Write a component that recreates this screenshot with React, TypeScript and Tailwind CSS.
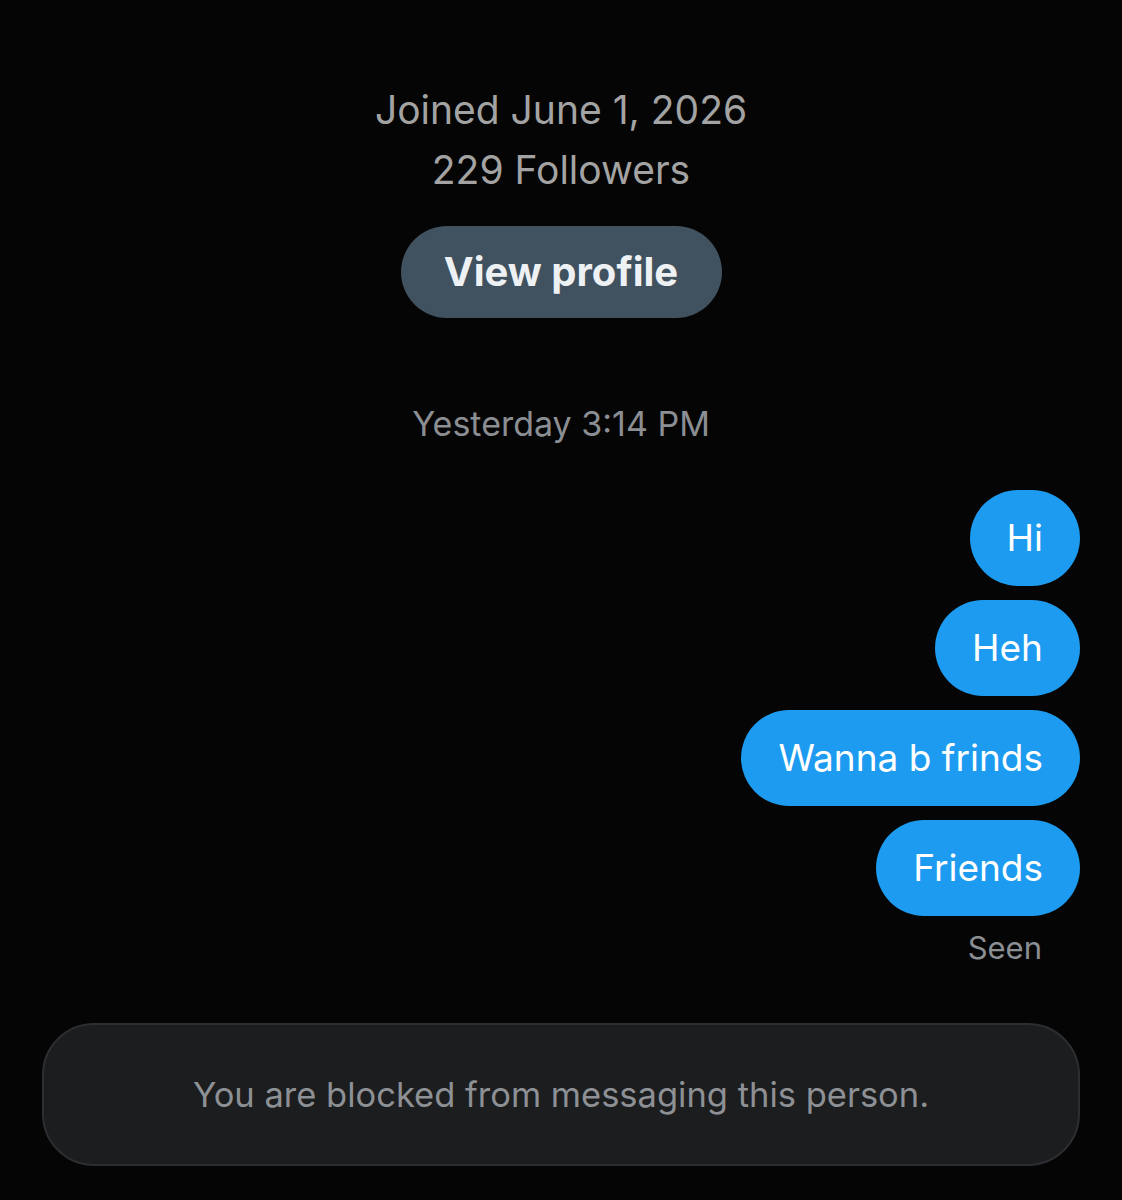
import React from "react";

const messages = ["Hi", "Heh", "Wanna b frinds", "Friends"];

export default function App() {
  return (
    <div
      className="w-[1122px] h-[1200px] bg-[#050505] flex flex-col overflow-hidden"
      style={{ fontFamily: "Inter, Roboto, 'Noto Sans', sans-serif" }}
    >
      <div className="flex flex-col items-center pt-[80px]">
        <p className="text-[39px] leading-[60px] text-[#a3a3a3]">Joined June 1, 2026</p>
        <p className="text-[39px] leading-[60px] text-[#a3a3a3]">229 Followers</p>
        <button className="mt-[26px] w-[321px] h-[92px] rounded-full bg-[#405260] text-[#eef1f3] text-[40px] font-bold">
          View profile
        </button>
        <p className="mt-[84px] text-[34px] leading-[44px] text-[#8b8e92]">Yesterday 3:14 PM</p>
      </div>

      <div className="flex flex-col items-end gap-[14px] pr-[42px] mt-[44px]">
        {messages.map((m) => (
          <div
            key={m}
            className="h-[96px] px-[37px] rounded-full bg-[#1d9bf0] text-white text-[37px] flex items-center"
          >
            {m}
          </div>
        ))}
        <p className="mr-[38px] -mt-[2px] text-[31px] leading-[40px] text-[#8b8e92]">Seen</p>
      </div>

      <div className="mx-[42px] mt-[55px] h-[143px] rounded-[52px] bg-[#1c1d1f] border-2 border-[#2c2e31] flex items-center justify-center">
        <p className="text-[34.5px] text-[#8d9094]">You are blocked from messaging this person.</p>
      </div>
    </div>
  );
}
